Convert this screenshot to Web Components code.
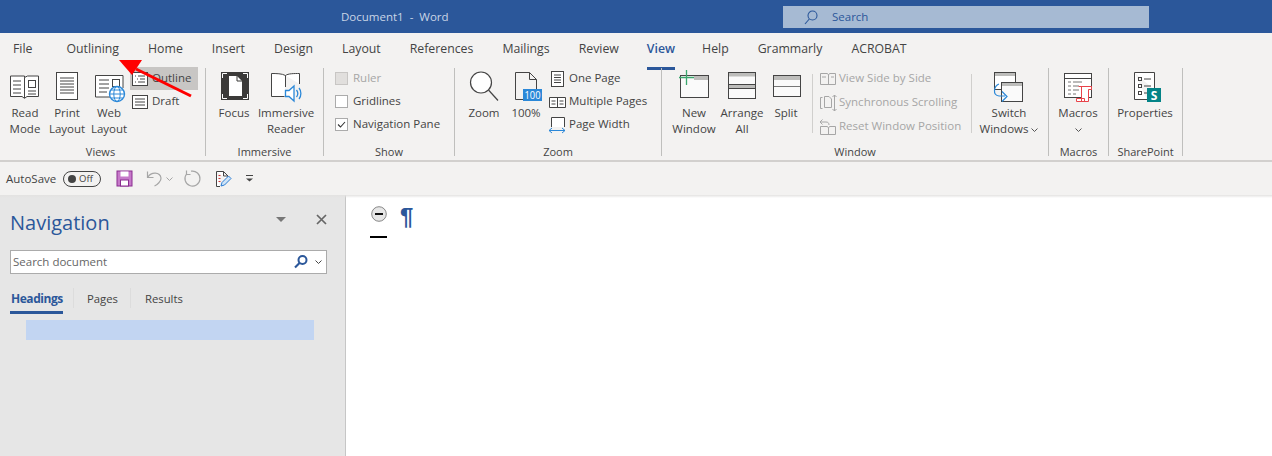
<!DOCTYPE html>
<html lang="en"><head><meta charset="utf-8"><title>Document1 - Word</title>
<style>
html,body{margin:0;height:456px;overflow:hidden;background:#f3f2f1}
body{font:12px/16px "Open Sans","Noto Sans",sans-serif;color:#444;display:flex;flex-direction:column;position:relative}
</style></head><body>
<word-titlebar></word-titlebar>
<word-tabs></word-tabs>
<word-ribbon>
  <ribbon-group label="Views" style="width:205px;--lp:0 4px 0 0">
    <ribbon-btn icon="read" w="38" style="margin-left:6px">Read<br>Mode</ribbon-btn>
    <ribbon-btn icon="print" w="46">Print<br>Layout</ribbon-btn>
    <ribbon-btn icon="web" w="38">Web<br>Layout</ribbon-btn>
    <ribbon-col style="margin-left:2px;width:68px">
      <ribbon-row icon="outline" active>Outline</ribbon-row>
      <ribbon-row icon="draft">Draft</ribbon-row>
    </ribbon-col>
  </ribbon-group>
  <ribbon-group label="Immersive" style="width:117px">
    <ribbon-btn icon="focus" w="40" style="margin-left:8px">Focus</ribbon-btn>
    <ribbon-btn icon="immersive" w="64">Immersive<br>Reader</ribbon-btn>
  </ribbon-group>
  <ribbon-group label="Show" style="width:130px">
    <ribbon-col style="margin-left:11px">
      <ribbon-check disabled>Ruler</ribbon-check>
      <ribbon-check>Gridlines</ribbon-check>
      <ribbon-check checked>Navigation Pane</ribbon-check>
    </ribbon-col>
  </ribbon-group>
  <ribbon-group label="Zoom" style="width:206px">
    <ribbon-btn icon="zoom" w="44" style="margin-left:7px">Zoom</ribbon-btn>
    <ribbon-btn icon="hundred" w="40">100%</ribbon-btn>
    <ribbon-col style="margin-left:1px">
      <ribbon-row icon="onepage">One Page</ribbon-row>
      <ribbon-row icon="multi">Multiple Pages</ribbon-row>
      <ribbon-row icon="pagewidth">Page Width</ribbon-row>
    </ribbon-col>
  </ribbon-group>
  <ribbon-group label="Window" style="width:386px">
    <ribbon-btn icon="newwin" w="44" style="margin-left:10px">New<br>Window</ribbon-btn>
    <ribbon-btn icon="arrange" w="52">Arrange<br>All</ribbon-btn>
    <ribbon-btn icon="split" w="36">Split</ribbon-btn>
    <ribbon-sep style="margin-left:8px"></ribbon-sep>
    <ribbon-col wide style="padding-left:5px;width:158px">
      <ribbon-row icon="sidebyside" disabled>View Side by Side</ribbon-row>
      <ribbon-row icon="syncscroll" disabled>Synchronous Scrolling</ribbon-row>
      <ribbon-row icon="resetpos" disabled>Reset Window Position</ribbon-row>
    </ribbon-col>
    <ribbon-sep></ribbon-sep>
    <ribbon-btn icon="switch" w="62" style="margin-left:6px">Switch<br>Windows <word-caret></word-caret></ribbon-btn>
  </ribbon-group>
  <ribbon-group label="Macros" style="width:59px">
    <ribbon-btn icon="macros" w="58">Macros<br><word-caret></word-caret></ribbon-btn>
  </ribbon-group>
  <ribbon-group label="SharePoint" style="width:73px">
    <ribbon-btn icon="props" w="72">Properties</ribbon-btn>
  </ribbon-group>
</word-ribbon>
<word-qat></word-qat>
<word-main>
  <nav-pane></nav-pane>
  <doc-area></doc-area>
</word-main>
<red-arrow></red-arrow>
<script>
const D='#444', B='#2b88d8';
const ICONS={
read:`<path d="M15.5 6H1.5V26.5H13l2.5 1.8 2.5-1.8H29.5V6H18.5L15.5 7.5zM15.5 7.5V28" fill="#fff" stroke="${D}"/><path d="M4 11h8M4 15h8M4 19h8M4 23h8M19 21h8M19 24h8" stroke="${D}"/><rect x="19.5" y="10.5" width="7" height="7" fill="none" stroke="${D}"/>`,
print:`<rect x="5.5" y="2.5" width="21" height="27" fill="#fff" stroke="${D}"/><path d="M9 8h14M9 11h14M9 14h14M9 17h14M9 20h14M9 23h14" stroke="${D}"/>`,
web:`<path d="M19 27H2.5V5.5H30V18" fill="#fff" stroke="${D}"/><path d="M6 10h10M6 14h10M6 18h10M6 22h8" stroke="${D}"/><rect x="19.5" y="9.5" width="7" height="7" fill="none" stroke="${D}"/><circle cx="24" cy="24" r="7.5" fill="#fff" stroke="${B}" stroke-width="1.4"/><ellipse cx="24" cy="24" rx="3.2" ry="7.5" fill="none" stroke="${B}"/><path d="M16.5 24h15M18 20h12M18 28h12" stroke="${B}"/>`,
focus:`<rect x="3" y="2" width="28" height="28" fill="#3b3a39"/><path d="M11 6h8l5 5v15H11z" fill="#fff"/><path d="M19 6v5h5" fill="none" stroke="#3b3a39"/><path d="M4.5 8V3.500H9M25 3.500h4.500V8M4.500 24v4.500H9M25 28.500h4.500V24" fill="none" stroke="#fff"/>`,
immersive:`<path d="M15.500 5.500C12 3.500 6 3.500 1.500 3.500V26.500H14.500M15.500 5.500C18 3.500 24 3.500 29.500 3.500V14M15.500 5.500V17" fill="#fff" stroke="${D}"/><path d="M15.500 20.500H19L24 16V31L19 26.500H15.500z" fill="#fff" stroke="${B}" stroke-width="1.300"/><path d="M26.500 20c1.500 2 1.500 5 0 7M29 18c2.500 3 2.500 8 0 11" fill="none" stroke="${B}" stroke-width="1.300"/>`,
zoom:`<circle cx="13" cy="12.500" r="10.500" fill="#fff" stroke="${D}" stroke-width="1.200"/><path d="M20.500 20L30 30.500" stroke="${D}" stroke-width="1.200"/>`,
hundred:`<path d="M5.500 29.500V2.500H19.500L26.500 9.500V19M19.500 2.500V9.500H26.500M5.500 29.500H13" fill="none" stroke="${D}"/><rect x="13" y="19" width="19" height="12" fill="#2b88d8"/><text x="22.500" y="29" text-anchor="middle" font-size="11.500" font-family="Open Sans" fill="#fff" textLength="16" lengthAdjust="spacingAndGlyphs">100</text>`,
newwin:`<rect x="2.500" y="5.500" width="28" height="22" fill="#fafafa" stroke="${D}"/><rect x="16" y="6" width="14" height="4" fill="#bdbdbb"/><path d="M8.500 0v15M1 7.500h15" stroke="#3aa76d" stroke-width="1.300"/>`,
arrange:`<rect x="2.500" y="2.500" width="27" height="26" fill="#fafafa" stroke="${D}"/><rect x="3" y="3" width="26" height="3.500" fill="#bdbdbb"/><rect x="3" y="15" width="26" height="3.500" fill="#bdbdbb"/><path d="M3 14.500h26M3 18.500h26" stroke="${D}"/>`,
split:`<rect x="3.500" y="5.500" width="27" height="21" fill="#fafafa" stroke="${D}"/><rect x="4" y="6" width="26" height="4" fill="#bdbdbb"/><path d="M4 16.500h26" stroke="#777"/>`,
switch:`<rect x="1.500" y="2.500" width="21" height="17" fill="#fff" stroke="${D}"/><rect x="2" y="3" width="20" height="3" fill="#bdbdbb"/><rect x="8.500" y="12.500" width="21" height="19" fill="#fafafa" stroke="${D}"/><rect x="9" y="13" width="20" height="3" fill="#bdbdbb"/><path d="M6 14C1 16-1 25 6 26H12M9 21.500L14 26.500 9 31.500" fill="none" stroke="${B}" stroke-width="1.200"/>`,
macros:`<rect x="2.500" y="3.500" width="27" height="24" fill="#fff" stroke="${D}"/><path d="M3 8.500h26" stroke="${D}"/><path d="M6 12h3M11 12h9M6 16h3M11 16h6M6 20h3M11 20h6M6 24h3M11 24h3" stroke="#777"/><path d="M16.500 16.500H29.500V19.500H26.500V31.500H19.500V28.500M19.500 16.500V28.500M14.500 28.500H22.500V31.500H14.500z" fill="#fff" stroke="#e8434a"/>`,
props:`<path d="M5.500 2.500H25.500V20M5.500 2.500V29.500H18" fill="#fff" stroke="${D}"/><rect x="9.500" y="7.500" width="3" height="3" fill="none" stroke="${D}"/><rect x="9.500" y="14.500" width="3" height="3" fill="none" stroke="${D}"/><rect x="9.500" y="21.500" width="3" height="3" fill="none" stroke="${D}"/><path d="M15 9h7M15 16h7M15 23h3" stroke="${D}"/><rect x="18" y="18" width="14" height="14" fill="#038387"/><text x="25" y="29.500" text-anchor="middle" font-size="12" font-weight="700" font-family="Open Sans" fill="#fff">S</text>`,
outline:`<rect x="1.500" y="2.500" width="15" height="13" fill="#fff" stroke="${D}"/><path d="M4 6h1M7 6h7M6 9h1M9 9h5M4 12h1M7 12h7" stroke="${D}"/>`,
draft:`<rect x="1.500" y="2.500" width="15" height="13" fill="#fff" stroke="${D}"/><path d="M4 6h10M4 9h10M4 12h10" stroke="${D}"/>`,
onepage:`<rect x="3.500" y="1.500" width="12" height="15" fill="#fff" stroke="${D}"/><path d="M6 5h7M6 7.500h7M6 10h7M6 12.500h7" stroke="${D}"/>`,
multi:`<path d="M1.500 4.500H17.500V14.500H1.500zM9.500 4.500V14.500" fill="#fff" stroke="${D}"/><path d="M3.500 8h4M3.500 11h4M11.500 8h4M11.500 11h4" stroke="${D}"/>`,
pagewidth:`<path d="M3.500 11V1.500H16.500V11" fill="#fff" stroke="${D}"/><path d="M1 14.500h16M1 14.500l3-2.500M1 14.500l3 2.500M17 14.500l-3-2.500M17 14.500l-3 2.500" fill="none" stroke="${B}"/>`,
sidebyside:`<path d="M1.500 3.500H8.500L9.500 5 10.500 3.500H16.500V14.500H1.500zM9.500 5V14.500" fill="none" stroke="#a6a6a6"/><path d="M3 7h4M12 7h3" stroke="#a6a6a6"/>`,
syncscroll:`<path d="M3.500 3.500H1.500V14.500H3.500M5.500 2.500H10L12.500 5V13.500H5.500z" fill="none" stroke="#a6a6a6"/><path d="M15.500 1V17M13.500 3l2-2 2 2M13.500 15l2 2 2-2" fill="none" stroke="#a6a6a6"/>`,
resetpos:`<path d="M1.500 8.500H8.500L9.500 10 10.500 8.500H16.500V16.500H1.500zM9.500 10V16.500" fill="none" stroke="#a6a6a6"/><path d="M1 4h6c2 0 3 1 3 3M1 4l2.500-2.500M1 4l2.500 2.500" fill="none" stroke="#a6a6a6"/>`,
save:`<rect x="1" y="1" width="15" height="15" fill="#c679c9" stroke="#8a2c90"/><rect x="4.500" y="1.500" width="8" height="5" fill="#fff"/><rect x="4.500" y="10" width="8" height="6" fill="#fff" stroke="#8a2c90"/>`,
undo:`<path d="M1.500 1.500V7.500H7.500M2 7C5 2 14 1.500 15 8C15.500 11 11 15 8.500 16" fill="none" stroke="#a6a6a6" stroke-width="1.200"/>`,
redo:`<path d="M7 1.200A7.500 7.500 0 1 1 2.500 4M2.500 .5V4.500H6.500" fill="none" stroke="#a6a6a6" stroke-width="1.200"/>`,
qatdoc:`<path d="M2.500 1.500H9.500L14 6V10M2.500 1.500V16.500H6M9.500 1.500V6H14" fill="#fff" stroke="${D}"/><path d="M4.500 5.500h2M4.500 8.500h2M4.500 11.500h2" stroke="#d13438"/><path d="M7 16l1-3.500L14.500 6l2.500 2.500-6.500 6.500z" fill="#cfe4f7" stroke="#2b7cd3"/>`,
search:`<circle cx="9.500" cy="6.500" r="4.500" fill="none" stroke="#2b579a" stroke-width="1.100"/><path d="M6.300 10L2 15" stroke="#2b579a" stroke-width="1.100"/>`,
navsearch:`<circle cx="9.500" cy="6" r="4" fill="none" stroke="#2b579a" stroke-width="2"/><path d="M6.500 9L2 13.500" stroke="#2b579a" stroke-width="2.200"/>`
};
function def(name,css,html){
  customElements.define(name,class extends HTMLElement{
    connectedCallback(){
      if(this.shadowRoot)return;
      const r=this.attachShadow({mode:'open'});
      r.innerHTML=`<style>${css}</style>`+(typeof html==='function'?html(this):html);
    }
  });
}
const svg=(n,w,h)=>`<svg width="${w}" height="${h}" viewBox="0 0 ${w} ${h}" style="display:block;overflow:visible">${ICONS[n]}</svg>`;

def('word-caret',':host{display:inline-block;vertical-align:1px}',
 `<svg width="7" height="4" viewBox="0 0 7 4" style="display:block"><path d="M.5.500L3.500 3.500 6.500.500" fill="none" stroke="#555"/></svg>`);

def('word-titlebar',`:host{display:flex;align-items:center;height:33px;background:#2b579a;flex:none;padding-left:341px;box-sizing:border-box}
 .t{width:442px;color:#c9d5e6;font-size:11.500px;line-height:16px}
 .s{width:366px;height:22px;background:#a6bad3;display:flex;align-items:center;color:#2b579a;font-size:11.500px;padding-left:20px;box-sizing:border-box;gap:13px}`,
 `<div class="t">Document1&nbsp; - &nbsp;Word</div><div class="s">${svg('search',16,16)}<span>Search</span></div>`);

def('word-tabs',`:host{display:flex;height:33px;flex:none;padding-left:13px;box-sizing:border-box;gap:29px;font-size:12.300px;color:#444}
 span{display:block;padding-top:8px;line-height:16px;height:26px;white-space:nowrap}
 .a{color:#2b579a;font-weight:600;border-bottom:3px solid #2b579a;margin:0 -2px 0 -1px}
 .o{margin-left:5px}`,
 `<span>File</span><span class="o">Outlining</span><span>Home</span><span>Insert</span><span>Design</span><span>Layout</span><span>References</span><span>Mailings</span><span>Review</span><span class="a">View</span><span>Help</span><span>Grammarly</span><span>ACROBAT</span>`);

def('word-ribbon',`:host{display:flex;height:96px;flex:none;box-sizing:border-box;padding-top:2px;border-bottom:2px solid #d2d0ce}`,`<slot></slot>`);

def('ribbon-group',`:host{display:flex;flex-direction:column;flex:none;height:88px;box-sizing:border-box;margin-right:1px;position:relative}
 :host::after{content:"";position:absolute;right:-1px;top:0;bottom:0;width:1px;background:#bfbfbd}
 .c{display:flex;flex:none;height:76px}
 .l{text-align:center;font-size:11px;line-height:16px;color:#444;white-space:nowrap;padding:var(--lp,0)}`,
 h=>`<div class="c"><slot></slot></div><div class="l">${h.getAttribute('label')}</div>`);

def('ribbon-btn',`:host{display:block;flex:none;font-size:11.500px;line-height:16px;text-align:center;padding-top:2px;box-sizing:border-box;white-space:nowrap}
 .i{display:flex;justify-content:center;height:32px;margin-bottom:3px}`,
 h=>`<style>:host{width:${h.getAttribute('w')}px}</style><div class="i">${svg(h.getAttribute('icon'),32,32)}</div><slot></slot>`);

def('ribbon-col',`:host{display:flex;flex-direction:column;flex:none;margin-top:-1px;height:70px;box-sizing:border-box}
 :host([wide]){gap:1px}`,`<slot></slot>`);

def('ribbon-sep',`:host{display:block;flex:none;width:1px;height:59px;margin-top:6px;background:#d0cfcd}`,``);

def('ribbon-row',`:host{display:flex;align-items:center;height:23px;flex:none;font-size:11.500px;gap:3px;white-space:nowrap;box-sizing:border-box}
 :host([active]){background:#c8c6c4}
 :host([disabled]){color:#a6a6a6;gap:2px}
 .i{flex:none;margin-left:1px}
 .t{display:block;margin-top:-1px}`,
 h=>`<div class="i">${svg(h.getAttribute('icon'),18,18)}</div><span class="t"><slot></slot></span>`);

def('ribbon-check',`:host{display:flex;align-items:center;height:23px;flex:none;font-size:11.500px;gap:5px;white-space:nowrap;box-sizing:border-box;padding-bottom:1px}
 :host([disabled]){color:#a6a6a6}
 .b{width:13px;height:13px;background:#fff;border:1px solid #ababab;box-sizing:border-box;display:block}
 :host([disabled]) .b{background:#e1dfdd;border-color:#c8c6c4}`,
 h=>`<span class="b">${h.hasAttribute('checked')?'<svg width="11" height="11" viewBox="0 0 11 11" style="display:block"><path d="M2 5.500L4.500 8 9 3" fill="none" stroke="#333" stroke-width="1.100"/></svg>':''}</span><slot></slot>`);

def('word-qat',`:host{display:flex;align-items:center;height:33px;flex:none;padding-left:6px;box-sizing:border-box;font-size:11.500px;color:#444}
 .tx{width:50px;white-space:nowrap}
 .tg{display:flex;align-items:center;width:38px;height:16px;border:1px solid #444;border-radius:8px;box-sizing:border-box;margin-left:7px;padding-left:4px;gap:3px;font-size:9.500px;line-height:14px}
 .tg i{display:block;width:8px;height:8px;border-radius:50%;background:#444;flex:none}
 .sv{margin-left:15px}.un{margin-left:13px}.ca{margin-left:3px;display:flex}.re{margin-left:11px}.dc{margin-left:13px}.dd{margin-left:14px}`,
 `<span class="tx">AutoSave</span><div class="tg"><i></i><span>Off</span></div>
 <div class="sv">${svg('save',17,17)}</div>
 <div class="un">${svg('undo',17,17)}</div>
 <div class="ca"><svg width="7" height="4" viewBox="0 0 7 4" style="display:block"><path d="M.5.500L3.500 3.500 6.500.500" fill="none" stroke="#a6a6a6"/></svg></div>
 <div class="re">${svg('redo',17,17)}</div>
 <div class="dc">${svg('qatdoc',17,17)}</div>
 <div class="dd"><svg width="9" height="7" viewBox="0 0 9 7" style="display:block"><path d="M1 .500H8" stroke="#444"/><path d="M1 3.500L4.500 6.500 8 3.500z" fill="#444"/></svg></div>`);

def('word-main',`:host{display:flex;flex:1;min-height:0;position:relative}
 :host::before{content:"";position:absolute;left:0;right:0;top:0;height:3px;background:linear-gradient(#e3e2e1,rgba(240,240,240,0));z-index:1}`,`<slot></slot>`);

def('nav-pane',`:host{display:block;width:346px;flex:none;background:#e6e6e6;border-right:1px solid #c6c6c6;box-sizing:border-box;padding:14px 18px 0 10px}
 .h{display:flex;align-items:center;height:27px}
 .h b{font-weight:400;font-size:20px;line-height:27px;color:#2b579a;flex:1}
 .tri{width:0;height:0;border:5px solid transparent;border-top:5px solid #777;border-bottom:0;margin:0 30px 6px 0}
 .x{display:block;margin-bottom:6px}
 .s{display:flex;align-items:center;height:24px;background:#fff;border:1px solid #ababab;box-sizing:border-box;margin-top:14px;padding:0 4px 0 2px;color:#666;font-size:11.500px}
 .s span{flex:1}
 .s svg{flex:none}
 .tabs{display:flex;margin-top:14px;height:29px;font-size:11.300px;color:#444}
 .tabs span{display:block;padding:3px 0 0;line-height:16px;white-space:nowrap}
 .tabs .a{color:#2b579a;font-weight:700;font-size:12px;letter-spacing:-.45px;border-bottom:3px solid #2b579a;width:53px;box-sizing:border-box;height:26px;padding-left:1px}
 .tabs i{display:block;width:1px;height:20px;background:#dcdcdc;margin-top:0}
 .tabs .s1{margin:0 13px 0 10px}.tabs .s2{margin:0 14px 0 12px}
 .hl{height:20px;background:#c2d5f2;margin:3px 13px 0 16px}`,
 `<div class="h"><b>Navigation</b><div class="tri"></div><svg class="x" width="11" height="11" viewBox="0 0 11 11"><path d="M1 1l9 9M10 1l-9 9" stroke="#666" stroke-width="1.700"/></svg></div>
 <div class="s"><span>Search document</span>${svg('navsearch',16,16)}<svg width="7" height="4" viewBox="0 0 7 4" style="margin-left:6px"><path d="M.5.500L3.500 3.500 6.500.500" fill="none" stroke="#444"/></svg></div>
 <div class="tabs"><span class="a">Headings</span><i class="s1"></i><span>Pages</span><i class="s2"></i><span>Results</span></div>
 <div class="hl"></div>`);

def('doc-area',`:host{display:block;flex:1;background:#fff;padding:11px 0 0 24px;box-sizing:border-box}
 .r{display:flex;align-items:flex-start;gap:13px}
 .m{width:17px}
 .u{height:2px;background:#000;margin-top:13px}
 .p{font:700 24px/26px "Liberation Sans",sans-serif;color:#2b579a;margin-top:-2px}`,
 `<div class="r"><div class="m"><svg width="17" height="17" viewBox="0 0 17 17" style="display:block"><circle cx="9" cy="8" r="7.300" fill="#e6e6e6" stroke="#888"/><path d="M5 8h8" stroke="#111" stroke-width="2"/></svg><div class="u"></div></div><div class="p">¶</div></div>`);

def('red-arrow',`:host{position:absolute;left:0;top:0;width:200px;height:100px;pointer-events:none}`,
 `<svg width="200" height="100" style="display:block"><path d="M136 69L191 96" stroke="#f00" stroke-width="3"/><path d="M119 60H142L132 75z" fill="#f00"/></svg>`);
</script>
</body></html>
